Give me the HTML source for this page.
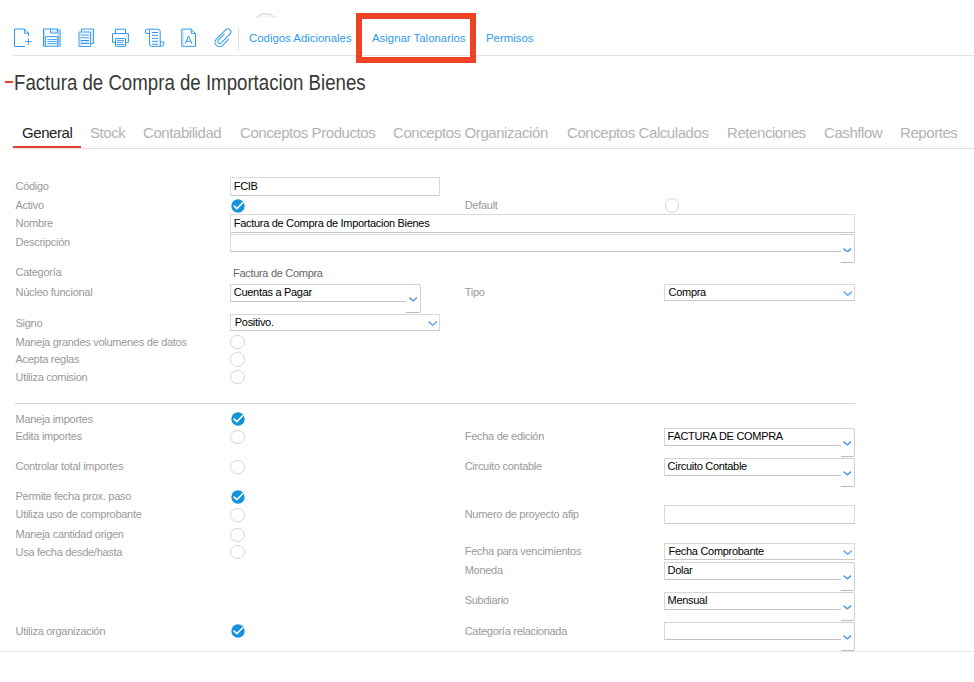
<!DOCTYPE html>
<html lang="es"><head><meta charset="utf-8"><title>Factura de Compra de Importacion Bienes</title>
<style>
*{box-sizing:border-box;margin:0;padding:0}
html,body{width:974px;height:682px;overflow:hidden;background:#fff}
body{font-family:"Liberation Sans",sans-serif;position:relative;color:#000}
.abs{position:absolute}
.tb-line{left:13px;top:55px;width:961px;height:1px;background:#e4e4e4}
.arc{left:252px;top:13px;width:25px;height:5px;overflow:hidden}
.arc:before{content:"";position:absolute;left:0;top:0;width:25px;height:25px;border-radius:50%;border:1px solid #cfcfcf;background:#f6f6f6}
.vsep{left:238px;top:28px;width:1px;height:23px;background:#ddd}
.tlink{position:absolute;top:31.3px;font-size:11.4px;color:#2f9bf0;white-space:nowrap;line-height:14px}
.redbox{left:356px;top:13px;width:120px;height:50px;border:6px solid #ee4224}
.title{left:14px;top:69.6px;font-size:21.5px;line-height:26px;color:#383838;white-space:nowrap;transform-origin:0 0;transform:scaleX(0.868)}
.dash{left:5px;top:81px;width:8px;height:2.4px;background:#e8432a}
.tab{position:absolute;top:123.6px;font-size:15px;line-height:18px;color:#b3b3b3;white-space:nowrap;letter-spacing:-0.43px}
.tab.on{color:#222}
.tabline{left:13px;top:147.7px;width:961px;height:1px;background:#e0e0e0}
.tabon{left:13.2px;top:145.8px;width:67.8px;height:2.6px;background:#e8432a}


.lb{position:absolute;font-size:11px;line-height:14px;color:#999;white-space:nowrap;letter-spacing:-0.28px}
.txt{position:absolute;font-size:11px;line-height:14px;color:#666;white-space:nowrap;letter-spacing:-0.3px}
.box{position:absolute;border:1px solid #d9d9d9;border-bottom-color:#c8c8c8;background:#fff}
.box span{position:absolute;font-size:11px;line-height:14px;color:#000;white-space:nowrap;letter-spacing:-0.3px}
.inp{height:19px}
.inp span{left:2.6px;top:0.8px}
.sel{height:17.4px}
.sel span{left:3.6px;top:-0.2px}
.sel svg{position:absolute;right:1.7px;top:6.4px}
.sel2{position:absolute;height:29px;border:1px solid #d0d0d0;border-bottom-color:#bcbcbc;border-radius:2.5px;background:#fff}
.sel2 .m{position:absolute;left:-1px;top:-1px;right:13.4px;height:18px;border:1px solid #d6d6d6;border-right:0;border-bottom-color:#c4c4c4;background:#fff;box-shadow:0 11px 0 0 #fff,-1px 11px 0 0 #fff}
.sel2 .m span{position:absolute;left:2.6px;top:0.1px;font-size:11px;line-height:14px;color:#000;white-space:nowrap;letter-spacing:-0.3px}
.sel2 svg{position:absolute;right:2.4px;top:12.2px}
.rd{position:absolute;width:14.4px;height:14.4px;border:1px solid #d3d6d8;border-radius:50%;background:#fff}
.ck{position:absolute}
.hr{position:absolute;height:1px;background:#d8d8d8}
</style></head><body>
<div class="abs tb-line"></div>
<svg class="abs" style="left:0;top:0" width="300" height="60" viewBox="0 0 300 60" fill="none" stroke="#2f98f2" stroke-width="1" stroke-linecap="butt" stroke-linejoin="miter">
<!-- new document -->
<path d="M24.8 46.5H14.5V29H24.4L28.5 33.2V36"/>
<path d="M24.4 29V33.2H28.5"/>
<path d="M28.4 38.3V44.9M25 41.6H31.8" stroke-width="0.9"/>
<!-- save -->
<path d="M43.5 29H58.4L60.4 31V46.2H43.5Z" stroke-width="1"/>
<path d="M58 29.5H60.6V46.5H58Z" fill="#9fcdf8" stroke="none"/>
<path d="M45.4 46.5V36.6H57.7V46.5" />
<path d="M44.6 30V46" stroke="#a9d2f9" stroke-width="0.8"/>
<path d="M50.4 29V33H57.4V29"/>
<path d="M51.6 30.2H56.8V32H51.6Z" fill="#cfe6fb" stroke="none"/>
<path d="M47.4 39.6H56.7M47.4 41.6H56.7M47.4 43.6H56.7" stroke-width="0.9"/>
<!-- copy -->
<path d="M81.5 31.4V29H93.6V43.4H91"/>
<path d="M79 32H90.6V46.4H79Z"/>
<path d="M80.2 32.5V46" stroke="#a9d2f9" stroke-width="0.9"/>
<path d="M92.3 29.5V43" stroke="#b9daf9" stroke-width="0.8"/>
<path d="M81 35H89M81 37.8H89M81 40.6H89M81 43.4H89" stroke-width="1.1"/>
<!-- print -->
<path d="M115.5 33.4V29.2H125.5V33.4"/>
<path d="M115.4 42.4H112.5V33.6H128.4V42.4H125.6"/>
<path d="M115.5 38.6H125.5V46.3H115.5Z"/>
<path d="M117 40.6H124M117 42.4H123M117 44.5H124" stroke-width="0.9"/>
<path d="M126.4 35.3V36.7" stroke-width="0.8" stroke="#7dbbf5"/>
<!-- scroll -->
<path d="M149.5 33.4H145.6V31Q145.6 29.2 147.4 29.2H158Q160.2 29.2 160.2 31.4V42"/>
<path d="M149.5 29.4V44Q149.5 46.3 151.8 46.3H161.6Q163.8 46.3 163.8 44.2V42H160.4V46"/>
<path d="M159.2 31V45.6" stroke="#b9daf9" stroke-width="0.9"/>
<path d="M152 32.5H158M152 35.4H158M152 38.4H158M152 41.3H158M152 44.2H158" stroke-width="1"/>
<!-- doc A -->
<path d="M181.8 29.1H191.2L195.5 33.4V46.3H181.8Z"/>
<path d="M191.2 29.1V33.4H195.5"/>
<path d="M183 30V46" stroke="#a9d2f9" stroke-width="0.9"/>
<path d="M185.3 43.8L188.6 35.9L191.9 43.8M186.4 41.3H190.8" stroke-width="1"/>
<!-- paperclip -->
<g transform="translate(210 25) rotate(-45)">
<path d="M3.9 16.6H-4.74A2 2 0 0 0 -4.74 20.6H7.6A3.05 3.05 0 0 0 7.6 14.5H-5.5A4.4 4.4 0 0 0 -5.5 23.3H3.2" stroke-width="1"/>
</g>
</svg>
<div class="abs arc"></div>
<div class="abs vsep"></div>
<span class="tlink" style="left:249px">Codigos Adicionales</span>
<span class="tlink" style="left:372px">Asignar Talonarios</span>
<span class="tlink" style="left:486px">Permisos</span>
<div class="abs redbox"></div>
<div class="abs dash"></div><div class="abs title">Factura de Compra de Importacion Bienes</div>
<span class="tab on" style="left:22px">General</span>
<span class="tab" style="left:90px">Stock</span>
<span class="tab" style="left:143px">Contabilidad</span>
<span class="tab" style="left:240px">Conceptos Productos</span>
<span class="tab" style="left:393px">Conceptos Organización</span>
<span class="tab" style="left:567px">Conceptos Calculados</span>
<span class="tab" style="left:727px">Retenciones</span>
<span class="tab" style="left:824px">Cashflow</span>
<span class="tab" style="left:900px">Reportes</span>
<div class="abs tabline"></div>
<div class="abs tabon"></div>
<span class="lb" style="left:15.5px;top:178.5px">Código</span>
<div class="box inp" style="left:230.2px;top:177px;width:210px"><span>FCIB</span></div>
<span class="lb" style="left:15.5px;top:198.1px">Activo</span>
<svg class="ck" style="left:230.7px;top:198.7px" width="14" height="14" viewBox="0 0 14 14"><circle cx="7" cy="7" r="6.7" fill="#1592dc"/><path d="M2.6 6.6L5.9 9.6L12.4 3" fill="none" stroke="#fff" stroke-width="1.5"/></svg>
<span class="lb" style="left:464.7px;top:198.1px">Default</span>
<i class="rd" style="left:665.0px;top:198.4px"></i>
<span class="lb" style="left:15.5px;top:215.9px">Nombre</span>
<div class="box inp" style="left:230.2px;top:214.4px;width:625px;height:18.5px"><span>Factura de Compra de Importacion Bienes</span></div>
<span class="lb" style="left:15.5px;top:235.2px">Descripción</span>
<div class="sel2" style="left:230.2px;top:234.4px;width:625px"><div class="m"><span></span></div><svg width="8.6" height="4.8" viewBox="0 0 8.6 4.8"><path d="M0.5 0.6L4.3 3.9L8.1 0.6" fill="none" stroke="#5594e0" stroke-width="1.4"/></svg></div>
<span class="lb" style="left:15.5px;top:265.3px">Categoría</span>
<span class="txt" style="left:233px;top:265.9px">Factura de Compra</span>
<span class="lb" style="left:15.5px;top:285.2px">Núcleo funcional</span>
<div class="sel2" style="left:230.2px;top:284px;width:190.6px"><div class="m"><span>Cuentas a Pagar</span></div><svg width="8.6" height="4.8" viewBox="0 0 8.6 4.8"><path d="M0.5 0.6L4.3 3.9L8.1 0.6" fill="none" stroke="#5594e0" stroke-width="1.4"/></svg></div>
<span class="lb" style="left:464.7px;top:285.2px">Tipo</span>
<div class="box sel" style="left:664px;top:283.8px;width:191px"><span>Compra</span><svg width="9.4" height="5.2" viewBox="0 0 9.4 5.2"><path d="M0.5 0.6L4.7 4.3L8.9 0.6" fill="none" stroke="#6ea8f2" stroke-width="1.5"/></svg></div>
<span class="lb" style="left:15.5px;top:315.5px">Signo</span>
<div class="box sel" style="left:230.2px;top:314px;width:210px"><span>Positivo.</span><svg width="9.4" height="5.2" viewBox="0 0 9.4 5.2"><path d="M0.5 0.6L4.7 4.3L8.9 0.6" fill="none" stroke="#6ea8f2" stroke-width="1.5"/></svg></div>
<span class="lb" style="left:15.5px;top:334.5px">Maneja grandes volumenes de datos</span>
<i class="rd" style="left:230.4px;top:334.7px"></i>
<span class="lb" style="left:15.5px;top:351.8px">Acepta reglas</span>
<i class="rd" style="left:230.4px;top:352.3px"></i>
<span class="lb" style="left:15.5px;top:369.5px">Utiliza comision</span>
<i class="rd" style="left:230.4px;top:370.1px"></i>
<div class="hr" style="left:15px;top:402.7px;width:840px"></div>
<span class="lb" style="left:15.5px;top:411.9px">Maneja importes</span>
<svg class="ck" style="left:230.6px;top:412.2px" width="14" height="14" viewBox="0 0 14 14"><circle cx="7" cy="7" r="6.7" fill="#1592dc"/><path d="M2.6 6.6L5.9 9.6L12.4 3" fill="none" stroke="#fff" stroke-width="1.5"/></svg>
<span class="lb" style="left:15.5px;top:429.2px">Edita importes</span>
<i class="rd" style="left:230.4px;top:429.6px"></i>
<span class="lb" style="left:464.7px;top:429.2px">Fecha de edición</span>
<div class="sel2" style="left:664px;top:428px;width:191px"><div class="m"><span>FACTURA DE COMPRA</span></div><svg width="8.6" height="4.8" viewBox="0 0 8.6 4.8"><path d="M0.5 0.6L4.3 3.9L8.1 0.6" fill="none" stroke="#5594e0" stroke-width="1.4"/></svg></div>
<span class="lb" style="left:15.5px;top:459.1px">Controlar total importes</span>
<i class="rd" style="left:230.4px;top:459.5px"></i>
<span class="lb" style="left:464.7px;top:459.1px">Circuito contable</span>
<div class="sel2" style="left:664px;top:458.2px;width:191px"><div class="m"><span>Circuito Contable</span></div><svg width="8.6" height="4.8" viewBox="0 0 8.6 4.8"><path d="M0.5 0.6L4.3 3.9L8.1 0.6" fill="none" stroke="#5594e0" stroke-width="1.4"/></svg></div>
<span class="lb" style="left:15.5px;top:489.3px">Permite fecha prox. paso</span>
<svg class="ck" style="left:230.6px;top:489.9px" width="14" height="14" viewBox="0 0 14 14"><circle cx="7" cy="7" r="6.7" fill="#1592dc"/><path d="M2.6 6.6L5.9 9.6L12.4 3" fill="none" stroke="#fff" stroke-width="1.5"/></svg>
<span class="lb" style="left:15.5px;top:507.2px">Utiliza uso de comprobante</span>
<i class="rd" style="left:230.4px;top:507.6px"></i>
<span class="lb" style="left:464.7px;top:507.2px">Numero de proyecto afip</span>
<div class="box inp" style="left:664px;top:505.4px;width:191px;height:18.5px"><span></span></div>
<span class="lb" style="left:15.5px;top:526.7px">Maneja cantidad origen</span>
<i class="rd" style="left:230.4px;top:527.6px"></i>
<span class="lb" style="left:15.5px;top:544.6px">Usa fecha desde/hasta</span>
<i class="rd" style="left:230.4px;top:545.0px"></i>
<span class="lb" style="left:464.7px;top:544.0px">Fecha para vencimientos</span>
<div class="box sel" style="left:664px;top:542.9px;width:191px"><span>Fecha Comprobante</span><svg width="9.4" height="5.2" viewBox="0 0 9.4 5.2"><path d="M0.5 0.6L4.7 4.3L8.9 0.6" fill="none" stroke="#6ea8f2" stroke-width="1.5"/></svg></div>
<span class="lb" style="left:464.7px;top:563.2px">Moneda</span>
<div class="sel2" style="left:664px;top:562px;width:191px"><div class="m"><span>Dolar</span></div><svg width="8.6" height="4.8" viewBox="0 0 8.6 4.8"><path d="M0.5 0.6L4.3 3.9L8.1 0.6" fill="none" stroke="#5594e0" stroke-width="1.4"/></svg></div>
<span class="lb" style="left:464.7px;top:593.2px">Subdiario</span>
<div class="sel2" style="left:664px;top:591.8px;width:191px"><div class="m"><span>Mensual</span></div><svg width="8.6" height="4.8" viewBox="0 0 8.6 4.8"><path d="M0.5 0.6L4.3 3.9L8.1 0.6" fill="none" stroke="#5594e0" stroke-width="1.4"/></svg></div>
<span class="lb" style="left:15.5px;top:623.9px">Utiliza organización</span>
<svg class="ck" style="left:230.6px;top:624.0px" width="14" height="14" viewBox="0 0 14 14"><circle cx="7" cy="7" r="6.7" fill="#1592dc"/><path d="M2.6 6.6L5.9 9.6L12.4 3" fill="none" stroke="#fff" stroke-width="1.5"/></svg>
<span class="lb" style="left:464.7px;top:623.9px">Categoría relacionada</span>
<div class="sel2" style="left:664px;top:621.9px;width:191px"><div class="m"><span></span></div><svg width="8.6" height="4.8" viewBox="0 0 8.6 4.8"><path d="M0.5 0.6L4.3 3.9L8.1 0.6" fill="none" stroke="#5594e0" stroke-width="1.4"/></svg></div>
<div class="hr" style="left:0;top:650.8px;width:974px;background:#e7e7df"></div>
</body></html>
